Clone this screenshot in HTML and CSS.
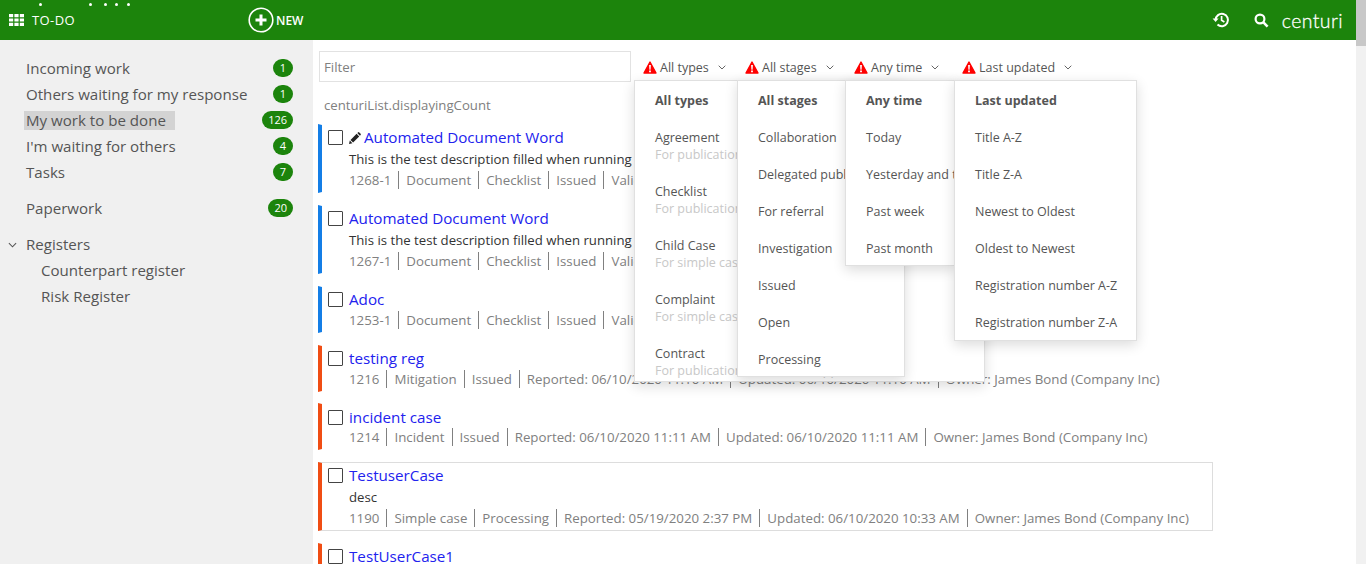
FILE: index.html
```html
<!DOCTYPE html>
<html lang="en">
<head>
    <meta charset="UTF-8">
    <title>Centuri To-Do</title>
    <link rel="stylesheet" href="styles.css">
</head>
<body>
<div class="page">
    <div class="app">
        <header class="topbar">
            <span class="dots"><i></i><i></i><i></i><i></i><i></i></span>
            <div class="topbar-left">
                <svg class="grid-icon" viewBox="0 0 15 12"><path fill="#fff" d="M0 0h4.200v3.300H0zM5.400 0h4.200v3.300H5.400zM10.800 0H15v3.300h-4.200zM0 4.400h4.200v3.200H0zM5.400 4.400h4.200v3.200H5.400zM10.800 4.400H15v3.200h-4.200zM0 8.700h4.200V12H0zM5.400 8.700h4.200V12H5.400zM10.800 8.700H15V12h-4.200z"/></svg>
                <span class="todo">TO-DO</span>
            </div>
            <div class="new-btn">
                <svg class="plus-icon" viewBox="0 0 26 26"><circle cx="13" cy="13" r="11.800" fill="none" stroke="#fff" stroke-width="1.600"/><path d="M13 7.500v11M7.500 13h11" stroke="#fff" stroke-width="3" fill="none"/></svg>
                <span>NEW</span>
            </div>
            <div class="topbar-right">
                <svg class="history-icon" viewBox="0 0 18 18"><path d="M3.600 9a6.200 6.200 0 1 1 1.900 4.500" fill="none" stroke="#fff" stroke-width="2"/><path d="M0.600 7.600h6l-3 3.400z" fill="#fff"/><path d="M9.600 5v4.300l2.800 1.700" fill="none" stroke="#fff" stroke-width="1.700"/></svg>
                <svg class="search-icon" viewBox="0 0 15 15"><circle cx="6" cy="6" r="4.400" fill="none" stroke="#fff" stroke-width="2.200"/><path d="M9.400 9.400l4.200 4.200" stroke="#fff" stroke-width="2.600" fill="none"/></svg>
                <span class="logo">centuri</span>
            </div>
        </header>

        <div class="body-row">
            <nav class="sidebar">
                <ul class="nav-group">
                    <li class="nav-item"><span>Incoming work</span><b class="badge">1</b></li>
                    <li class="nav-item"><span>Others waiting for my response</span><b class="badge">1</b></li>
                    <li class="nav-item active"><span>My work to be done</span><b class="badge">126</b></li>
                    <li class="nav-item"><span>I'm waiting for others</span><b class="badge">4</b></li>
                    <li class="nav-item"><span>Tasks</span><b class="badge">7</b></li>
                </ul>
                <ul class="nav-group">
                    <li class="nav-item"><span>Paperwork</span><b class="badge">20</b></li>
                </ul>
                <ul class="nav-group">
                    <li class="nav-item nav-parent">
                        <svg class="caret" viewBox="0 0 10 6"><path d="M1 1l4 4 4-4" fill="none" stroke="#555" stroke-width="1.200"/></svg>
                        <span>Registers</span>
                    </li>
                    <li class="nav-item nav-child"><span>Counterpart register</span></li>
                    <li class="nav-item nav-child"><span>Risk Register</span></li>
                </ul>
            </nav>

            <main class="content">
                <div class="filters">
                    <input class="filter-input" type="text" placeholder="Filter">

                    <div class="filter f-types">
                        <svg class="warn" viewBox="0 0 14 13"><path d="M7 1l6 11H1z" fill="#f00" stroke="#f00" stroke-width="1.400" stroke-linejoin="round"/><path d="M6.100 4h1.800l-.3 4.800H6.400zM6.100 9.500h1.800v1.700H6.100z" fill="#fff"/></svg>
                        <span>All types</span>
                        <svg class="chev" viewBox="0 0 8 5"><path d="M.7.700L4 4 7.300.700" fill="none" stroke="#666"/></svg>
                        <div class="menu menu-types">
                            <div class="menu-head">All types</div>
                            <div class="menu-opt"><div>Agreement</div><small>For publication</small></div>
                            <div class="menu-opt"><div>Checklist</div><small>For publication</small></div>
                            <div class="menu-opt"><div>Child Case</div><small>For simple cases</small></div>
                            <div class="menu-opt"><div>Complaint</div><small>For simple cases</small></div>
                            <div class="menu-opt"><div>Contract</div><small>For publication, review and approval</small></div>
                        </div>
                    </div>

                    <div class="filter f-stages">
                        <svg class="warn" viewBox="0 0 14 13"><path d="M7 1l6 11H1z" fill="#f00" stroke="#f00" stroke-width="1.400" stroke-linejoin="round"/><path d="M6.100 4h1.800l-.3 4.800H6.400zM6.100 9.500h1.800v1.700H6.100z" fill="#fff"/></svg>
                        <span>All stages</span>
                        <svg class="chev" viewBox="0 0 8 5"><path d="M.7.700L4 4 7.300.700" fill="none" stroke="#666"/></svg>
                        <div class="menu menu-stages">
                            <div class="menu-head">All stages</div>
                            <div class="menu-line">Collaboration</div>
                            <div class="menu-line">Delegated publication</div>
                            <div class="menu-line">For referral</div>
                            <div class="menu-line">Investigation</div>
                            <div class="menu-line">Issued</div>
                            <div class="menu-line">Open</div>
                            <div class="menu-line">Processing</div>
                        </div>
                    </div>

                    <div class="filter f-time">
                        <svg class="warn" viewBox="0 0 14 13"><path d="M7 1l6 11H1z" fill="#f00" stroke="#f00" stroke-width="1.400" stroke-linejoin="round"/><path d="M6.100 4h1.800l-.3 4.800H6.400zM6.100 9.500h1.800v1.700H6.100z" fill="#fff"/></svg>
                        <span>Any time</span>
                        <svg class="chev" viewBox="0 0 8 5"><path d="M.7.700L4 4 7.300.700" fill="none" stroke="#666"/></svg>
                        <div class="menu menu-time">
                            <div class="menu-head">Any time</div>
                            <div class="menu-line">Today</div>
                            <div class="menu-line">Yesterday and today</div>
                            <div class="menu-line">Past week</div>
                            <div class="menu-line">Past month</div>
                        </div>
                    </div>

                    <div class="filter f-sort">
                        <svg class="warn" viewBox="0 0 14 13"><path d="M7 1l6 11H1z" fill="#f00" stroke="#f00" stroke-width="1.400" stroke-linejoin="round"/><path d="M6.100 4h1.800l-.3 4.800H6.400zM6.100 9.500h1.800v1.700H6.100z" fill="#fff"/></svg>
                        <span>Last updated</span>
                        <svg class="chev" viewBox="0 0 8 5"><path d="M.7.700L4 4 7.300.700" fill="none" stroke="#666"/></svg>
                        <div class="menu menu-sort">
                            <div class="menu-head">Last updated</div>
                            <div class="menu-line">Title A-Z</div>
                            <div class="menu-line">Title Z-A</div>
                            <div class="menu-line">Newest to Oldest</div>
                            <div class="menu-line">Oldest to Newest</div>
                            <div class="menu-line">Registration number A-Z</div>
                            <div class="menu-line">Registration number Z-A</div>
                        </div>
                    </div>
                </div>

                <div class="count">centuriList.displayingCount</div>

                <div class="card doc">
                    <div class="card-title">
                        <span class="check"></span>
                        <svg class="pencil" viewBox="0 0 12 12"><path d="M0 12l.8-3.400 2.600 2.600zM1.500 7.900L7.600 1.800l2.600 2.600-6.100 6.100zM8.300 1.100l.7-.7a1 1 0 0 1 1.300 0l1.300 1.300a1 1 0 0 1 0 1.300l-.7.7z" fill="#222"/></svg>
                        <a>Automated Document Word</a>
                    </div>
                    <p class="desc">This is the test description filled when running the automated test</p>
                    <div class="meta"><span>1268-1</span><span>Document</span><span>Checklist</span><span>Issued</span><span>Valid</span></div>
                </div>
                <div class="card doc">
                    <div class="card-title"><span class="check"></span><a>Automated Document Word</a></div>
                    <p class="desc">This is the test description filled when running the automated test</p>
                    <div class="meta"><span>1267-1</span><span>Document</span><span>Checklist</span><span>Issued</span><span>Valid</span></div>
                </div>
                <div class="card doc">
                    <div class="card-title"><span class="check"></span><a>Adoc</a></div>
                    <div class="meta"><span>1253-1</span><span>Document</span><span>Checklist</span><span>Issued</span><span>Valid</span></div>
                </div>
                <div class="card case">
                    <div class="card-title"><span class="check"></span><a>testing reg</a></div>
                    <div class="meta"><span>1216</span><span>Mitigation</span><span>Issued</span><span>Reported: 06/10/2020 11:10 AM</span><span>Updated: 06/10/2020 11:10 AM</span><span>Owner: James Bond (Company Inc)</span></div>
                </div>
                <div class="card case">
                    <div class="card-title"><span class="check"></span><a>incident case</a></div>
                    <div class="meta"><span>1214</span><span>Incident</span><span>Issued</span><span>Reported: 06/10/2020 11:11 AM</span><span>Updated: 06/10/2020 11:11 AM</span><span>Owner: James Bond (Company Inc)</span></div>
                </div>
                <div class="card case hovered">
                    <div class="card-title"><span class="check"></span><a>TestuserCase</a></div>
                    <p class="desc">desc</p>
                    <div class="meta"><span>1190</span><span>Simple case</span><span>Processing</span><span>Reported: 05/19/2020 2:37 PM</span><span>Updated: 06/10/2020 10:33 AM</span><span>Owner: James Bond (Company Inc)</span></div>
                </div>
                <div class="card case">
                    <div class="card-title"><span class="check"></span><a>TestUserCase1</a></div>
                    <p class="desc">desc</p>
                </div>
            </main>
        </div>
    </div>
    <div class="scrollbar"><div class="thumb"></div></div>
</div>
</body>
</html>
```

FILE: styles.css
```css
:root {
    --green: #1c840c;
    --text: #555;
    --muted: #808080;
    --link: #2222ee;
    --border: #ddd;
}

* {
    box-sizing: border-box;
    margin: 0;
    padding: 0;
}

html, body {
    height: 100%;
    overflow: hidden;
}

body {
    font-family: "Open Sans", "Noto Sans", sans-serif;
    color: var(--text);
    background: #fff;
}

.page {
    display: flex;
    height: 564px;
    overflow: hidden;
}

.app {
    flex: 1;
    min-width: 0;
    display: flex;
    flex-direction: column;
}

.scrollbar {
    width: 10px;
    background: #f1f1f1;
}

.thumb {
    height: 46px;
    background: #c8c8c8;
}

/* top bar */
.topbar {
    position: relative;
    flex: none;
    height: 40px;
    background: var(--green);
    color: #fff;
    display: flex;
    align-items: center;
    padding-left: 9px;
}

.dots i {
    position: absolute;
    top: 3px;
    width: 3px;
    height: 3px;
    border-radius: 50%;
    background: #fff;
}

.dots i:nth-child(1) { left: 39px; }
.dots i:nth-child(2) { left: 89px; }
.dots i:nth-child(3) { left: 104px; }
.dots i:nth-child(4) { left: 115px; }
.dots i:nth-child(5) { left: 127px; }

.topbar-left {
    display: flex;
    align-items: center;
    width: 239px;
}

.grid-icon {
    width: 15px;
    height: 12px;
    margin-right: 8px;
}

.todo {
    font-size: 13px;
    letter-spacing: .4px;
}

.new-btn span {
    font-size: 12px;
}

.new-btn {
    display: flex;
    align-items: center;
    gap: 2px;
    font-weight: 600;
}

.plus-icon {
    width: 26px;
    height: 26px;
}

.topbar-right {
    margin-left: auto;
    display: flex;
    align-items: center;
    padding-right: 13px;
}

.history-icon {
    width: 18px;
    height: 18px;
    margin-right: 24px;
}

.search-icon {
    width: 15px;
    height: 15px;
    margin-right: 13px;
}

.logo {
    font-family: Lato, sans-serif;
    font-weight: 300;
    font-size: 19.5px;
    letter-spacing: .4px;
    -webkit-text-stroke: .3px #fff;
}

/* left nav */
.body-row {
    flex: 1;
    min-height: 0;
    display: flex;
}

.sidebar {
    flex: none;
    width: 313px;
    background: #f0f0f0;
    padding: 15px 20px 0 24px;
}

.nav-group {
    list-style: none;
    margin-bottom: 10px;
}

.nav-item {
    display: flex;
    align-items: center;
    justify-content: space-between;
    height: 26px;
    font-size: 15.1px;
}

.nav-item span {
    padding: 0 2px;
    line-height: 19px;
}

.nav-item.active span {
    background: #d3d3d3;
    padding-right: 9px;
}

.nav-parent {
    justify-content: flex-start;
    position: relative;
}

.caret {
    position: absolute;
    left: -16px;
    top: 11px;
    width: 9px;
    height: 6px;
}

.nav-child {
    padding-left: 15px;
}

.badge {
    min-width: 20px;
    height: 18px;
    padding: 0 6px;
    border-radius: 10px;
    background: var(--green);
    color: #fff;
    font-size: 11px;
    font-weight: 400;
    line-height: 18px;
    text-align: center;
}

/* filter row */
.content {
    flex: 1;
    min-width: 0;
    padding: 11px 0 0 5px;
}

.filters {
    display: flex;
    align-items: center;
    height: 31px;
}

.filter-input {
    width: 312px;
    height: 31px;
    margin-left: 1px;
    margin-right: 12px;
    padding: 0 4px;
    border: 1px solid #e2e2e2;
    font: 13.3px "Open Sans", sans-serif;
    color: var(--text);
}

.filter-input::placeholder {
    color: #808080;
}

.filter {
    position: relative;
    display: flex;
    align-items: center;
    padding-top: 2px;
    font-size: 12.5px;
    white-space: nowrap;
}

.f-types { width: 102px; }
.f-stages { width: 109px; }
.f-time { width: 108px; }
.f-sort { width: 120px; }

.warn {
    width: 14px;
    height: 13px;
    margin-right: 3px;
    flex: none;
}

.chev {
    width: 8px;
    height: 5px;
    margin-left: 9px;
    flex: none;
}

/* dropdown menus */
.menu {
    position: absolute;
    top: 23px;
    background: #fff;
    border: 1px solid #e0e0e0;
    box-shadow: 0 4px 12px rgba(0, 0, 0, .14);
    color: #555;
    font-size: 12.5px;
    overflow: hidden;
    padding: 0 20px;
}

.menu-types {
    left: -9px;
    width: 351px;
    height: 302px;
    z-index: 1;
}

.menu-stages {
    left: -8px;
    width: 168px;
    height: 297px;
    z-index: 2;
}

.menu-time {
    left: -9px;
    width: 110px;
    height: 186px;
    z-index: 3;
}

.menu-sort {
    left: -8px;
    width: 183px;
    height: 261px;
    z-index: 4;
}

.menu-head {
    height: 38px;
    line-height: 39px;
    font-weight: 700;
}

.menu-line {
    height: 37px;
    line-height: 37px;
    white-space: nowrap;
}

.menu-opt {
    height: 54px;
    padding-top: 10px;
    line-height: 17px;
    white-space: nowrap;
}

.menu-opt small {
    display: block;
    font-size: 12.5px;
    color: #c8c8c8;
}

/* list */
.count {
    font-size: 13.2px;
    color: var(--muted);
    margin: 15px 0 10px 6px;
    line-height: 17px;
}

.card {
    width: 895px;
    border-left: 4px solid #147ee6;
    border-top: 1px solid transparent;
    border-right: 1px solid transparent;
    border-bottom: 1px solid transparent;
    padding: 2px 0 0 6px;
    margin-bottom: 12px;
}

.card.case {
    border-left-color: #f04d14;
    padding-top: 2.4px;
    margin-bottom: 11.6px;
}

.card.hovered {
    border-top-color: var(--border);
    border-right-color: var(--border);
    border-bottom-color: var(--border);
}

.card-title {
    display: flex;
    align-items: center;
    height: 21px;
    white-space: nowrap;
}

.card-title a {
    color: var(--link);
    font-size: 15.2px;
    margin-bottom: 1px;
}

.check {
    width: 15px;
    height: 15px;
    border: 1px solid #444;
    border-radius: 1px;
    margin-right: 6px;
    flex: none;
}

.pencil {
    width: 12px;
    height: 12px;
    margin-right: 3px;
}

.desc {
    font-size: 13.2px;
    color: #333;
    line-height: 22.33px;
    padding-left: 21px;
    white-space: nowrap;
}

.meta {
    display: flex;
    font-size: 13.3px;
    color: var(--muted);
    padding-left: 21px;
    height: 21.67px;
    padding-bottom: 2px;
    align-items: center;
    white-space: nowrap;
}

.meta span {
    line-height: 18px;
    padding-right: 7px;
    margin-right: 7px;
    border-right: 1px solid #808080;
}

.meta span:last-child {
    border-right: 0;
}
```
